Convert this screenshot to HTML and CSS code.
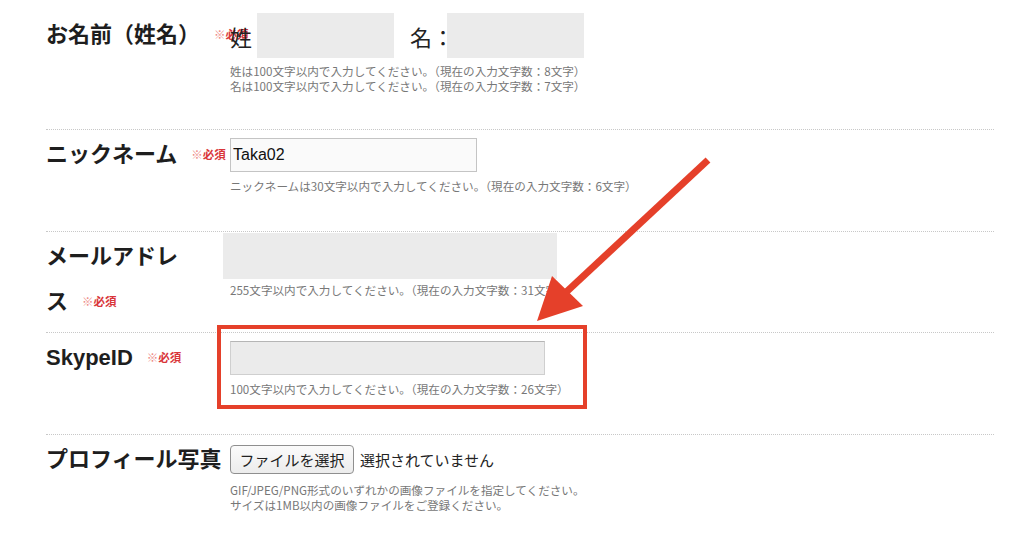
FILE: index.html
```html
<!DOCTYPE html>
<html lang="ja">
<head>
    <meta charset="UTF-8">
    <meta name="viewport" content="width=device-width, initial-scale=1.0">
    <title>プロフィール編集</title>
    <link rel="stylesheet" href="styles.css">
</head>
<body>
    <div class="form">
        <!-- 姓名 -->
        <div class="row row-name">
            <div class="label nowrap">お名前（姓名）<span class="req"><span class="req-mark">※</span>必須</span></div>
            <div class="field">
                <div class="name-line">
                    <span class="name-part">姓</span>
                    <input type="text" class="text-input blank name-input">
                    <span class="name-part name-second">名：</span>
                    <input type="text" class="text-input blank name-input">
                </div>
                <div class="help help-name">姓は100文字以内で入力してください。（現在の入力文字数：8文字）<br>名は100文字以内で入力してください。（現在の入力文字数：7文字）</div>
            </div>
        </div>

        <!-- ニックネーム -->
        <div class="row">
            <div class="label">ニックネーム<span class="req"><span class="req-mark">※</span>必須</span></div>
            <div class="field">
                <input type="text" class="text-input nick-input" value="Taka02">
                <div class="help">ニックネームは30文字以内で入力してください。（現在の入力文字数：6文字）</div>
            </div>
        </div>

        <!-- メールアドレス -->
        <div class="row row-mail">
            <div class="label">メールアドレ<span class="nowrap">ス<span class="req"><span class="req-mark">※</span>必須</span></span></div>
            <div class="field field-mail">
                <input type="text" class="text-input blank mail-input">
                <div class="help help-mail">255文字以内で入力してください。（現在の入力文字数：31文字）</div>
            </div>
        </div>

        <!-- SkypeID -->
        <div class="row">
            <div class="label">SkypeID<span class="req"><span class="req-mark">※</span>必須</span></div>
            <div class="field">
                <input type="text" class="text-input skype-input">
                <div class="help">100文字以内で入力してください。（現在の入力文字数：26文字）</div>
            </div>
        </div>

        <!-- プロフィール写真 -->
        <div class="row row-photo">
            <div class="label">プロフィール写真</div>
            <div class="field field-photo">
                <div class="file-line">
                    <button type="button" class="file-btn">ファイルを選択</button>
                    <span class="file-name">選択されていません</span>
                </div>
                <div class="help help-photo">GIF/JPEG/PNG形式のいずれかの画像ファイルを指定してください。<br>サイズは1MB以内の画像ファイルをご登録ください。</div>
            </div>
        </div>
    </div>

    <!-- 注釈（赤枠と矢印） -->
    <svg class="annotation" width="1024" height="549" viewBox="0 0 1024 549">
        <rect x="219" y="327" width="366" height="80" fill="none" stroke="#e5402a" stroke-width="4"/>
        <line x1="708" y1="160" x2="562" y2="296" stroke="#e5402a" stroke-width="7"/>
        <polygon points="537,321 552,276 583,306" fill="#e5402a"/>
    </svg>
</body>
</html>
```

FILE: styles.css
```css
body {
    margin: 0;
    background-color: #fff;
    font-family: "Noto Sans CJK JP", "Liberation Sans", sans-serif;
    color: #222;
    position: relative;
    overflow: hidden;
}
.form {
    margin-left: 46px;
    margin-right: 30px;
}
.row {
    display: flex;
    box-sizing: border-box;
    min-height: 102px;
    border-bottom: 1px dotted #c8c8c8;
}
.row-name {
    min-height: 130px;
}
.row-mail {
    min-height: 101px;
}
.row-photo {
    border-bottom: none;
}
.label {
    width: 184px;
    flex-shrink: 0;
    padding-top: 2px;
    font-family: "Liberation Sans", "Noto Sans CJK JP", sans-serif;
    font-size: 22px;
    font-weight: bold;
    line-height: 45px;
    color: #1e1e1e;
}
.nowrap {
    white-space: nowrap;
}
.row-name .label {
    padding-top: 12px;
}
.req {
    margin-left: 14px;
    font-family: "Noto Sans CJK JP", sans-serif;
    font-size: 11.5px;
    font-weight: bold;
    color: #d9363a;
    vertical-align: 3px;
}
.req-mark {
    font-weight: normal;
    color: #ee8c88;
}
.field {
    padding-top: 8px;
}
.row-name .field {
    padding-top: 13px;
}
.field-mail {
    padding-top: 1px;
    margin-left: -7px;
}
.field-photo {
    padding-top: 10px;
}
.name-line {
    display: flex;
    align-items: center;
}
.name-part {
    font-size: 22px;
    line-height: 30px;
    color: #222;
}
.name-second {
    margin-left: 16px;
    margin-right: -12px;
}
.text-input {
    display: block;
    box-sizing: border-box;
    margin: 0;
    border: 1px solid #c4c4c4;
    background-color: #fafafa;
    font-family: "Liberation Sans", sans-serif;
    font-size: 16px;
    color: #111;
    outline: none;
}
.blank {
    border: none;
    background-color: #ebebeb;
}
.name-input {
    width: 137px;
    height: 45px;
    margin-left: 5px;
}
.nick-input {
    width: 247px;
    height: 34px;
    padding: 0 2px;
}
.mail-input {
    width: 334px;
    height: 46px;
}
.skype-input {
    width: 315px;
    height: 34px;
    background-color: #ebebeb;
    border-color: #cfcfcf;
    border-top-color: #b5b5b5;
}
.help {
    margin-top: 7px;
    font-size: 11.6px;
    line-height: 15px;
    color: #777;
}
.help-name {
    margin-top: 6px;
}
.help-mail {
    margin-top: 4px;
    margin-left: 7px;
}
.help-photo {
    margin-top: 9px;
}
.file-line {
    display: flex;
    align-items: center;
}
.file-btn {
    box-sizing: border-box;
    width: 124px;
    height: 29px;
    padding: 0;
    border: 1px solid #8f8f8f;
    border-radius: 4px;
    background: linear-gradient(#fbfbfb, #ececec);
    font-family: "Noto Sans CJK JP", sans-serif;
    font-size: 15px;
    color: #222;
}
.file-name {
    margin-left: 6px;
    font-size: 15px;
    color: #222;
}
/* 注釈レイヤー */
.annotation {
    position: absolute;
    top: 0;
    left: 0;
    pointer-events: none;
}
```
